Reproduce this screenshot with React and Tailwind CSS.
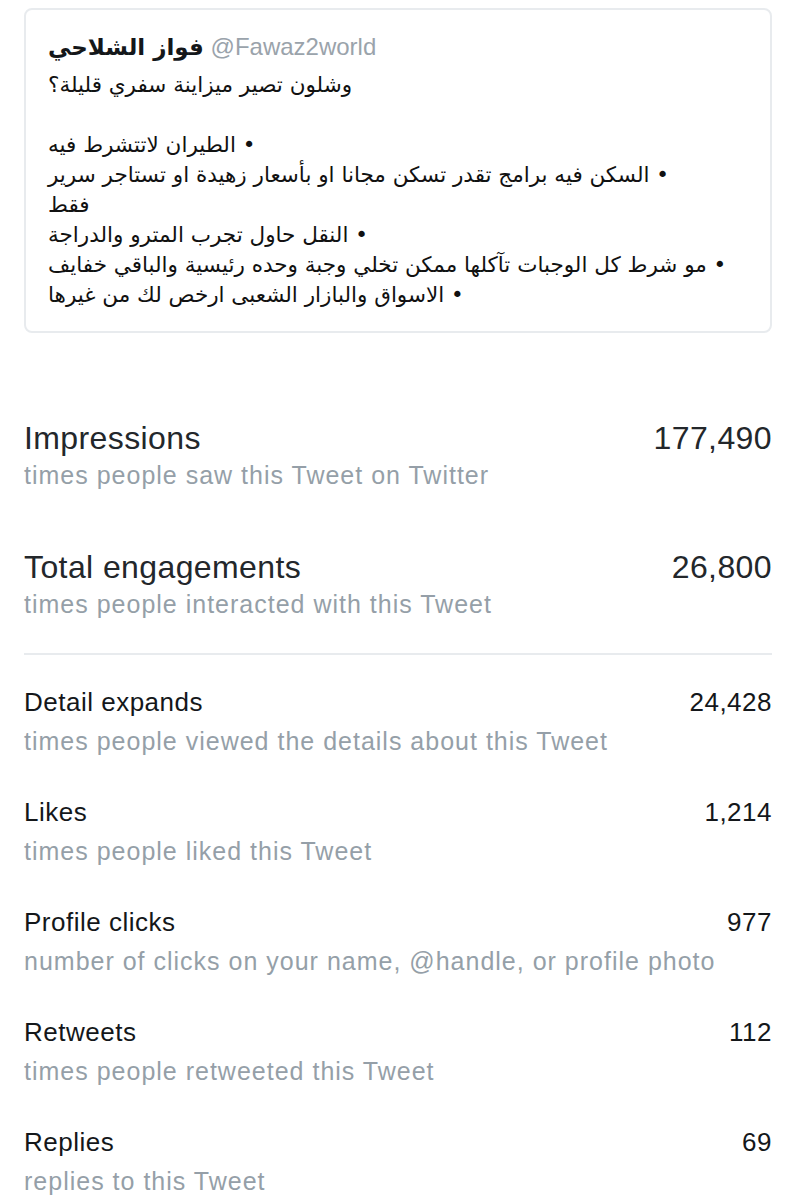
const lines = [
  'وشلون تصير ميزاينة سفري قليلة؟',
  null,
  '• الطيران لاتتشرط فيه',
  '• السكن فيه برامج تقدر تسكن مجانا او بأسعار زهيدة او تستاجر سرير',
  'فقط',
  '• النقل حاول تجرب المترو والدراجة',
  '• مو شرط كل الوجبات تآكلها ممكن تخلي وجبة وحده رئيسية والباقي خفايف',
  '• الاسواق والبازار الشعبى ارخص لك من غيرها',
]

const bigStats = [
  { label: 'Impressions', value: '177,490', desc: 'times people saw this Tweet on Twitter' },
  { label: 'Total engagements', value: '26,800', desc: 'times people interacted with this Tweet' },
]

const stats = [
  { label: 'Detail expands', value: '24,428', desc: 'times people viewed the details about this Tweet' },
  { label: 'Likes', value: '1,214', desc: 'times people liked this Tweet' },
  { label: 'Profile clicks', value: '977', desc: 'number of clicks on your name, @handle, or profile photo' },
  { label: 'Retweets', value: '112', desc: 'times people retweeted this Tweet' },
  { label: 'Replies', value: '69', desc: 'replies to this Tweet' },
]

function App() {
  return (
    <div className="min-h-[1200px] w-[796px] bg-white font-['Liberation_Sans',Arial,sans-serif] text-[#14171a]">
      <div className="pt-[8px] px-[24px]">
        <div className="h-[325px] rounded-[8px] border-2 border-[#e8ebee] px-[22px] pt-[22px]">
          <p className="text-[24px] leading-[30px]">
            <span className="font-['DejaVu_Sans',sans-serif] text-[23px] font-bold" dir="rtl">فواز الشلاحي</span>{' '}
            <span className="text-[#9aa3ab]">@Fawaz2world</span>
          </p>
          <div className="mt-[8px] font-['DejaVu_Sans',sans-serif] text-[21.5px] leading-[30px] text-[#111]">
            {lines.map((line, i) =>
              line === null ? (
                <div key={i} className="h-[30px]" />
              ) : (
                <p key={i} dir="rtl" className="text-left whitespace-nowrap">
                  {line}
                </p>
              ),
            )}
          </div>
        </div>
      </div>

      <div className="px-[24px]">
        <div className="mt-[86px] space-y-[55px]">
          {bigStats.map((s) => (
            <div key={s.label}>
              <div className="flex items-center justify-between text-[32px] leading-[38px] tracking-[0.4px] text-[#23272b]">
                <span>{s.label}</span>
                <span>{s.value}</span>
              </div>
              <p className="text-[25px] leading-[36px] tracking-[1px] text-[#959fa8]">{s.desc}</p>
            </div>
          ))}
        </div>

        <div className="mt-[31px] h-[2px] bg-[#e8ebee]" />

        <div className="mt-[28px] space-y-[32px]">
          {stats.map((s) => (
            <div key={s.label}>
              <div className="flex items-center justify-between text-[26px] leading-[38px] tracking-[0.5px]">
                <span>{s.label}</span>
                <span>{s.value}</span>
              </div>
              <p className="text-[25px] leading-[40px] tracking-[1px] text-[#959fa8]">{s.desc}</p>
            </div>
          ))}
        </div>
      </div>
    </div>
  )
}

export default App
